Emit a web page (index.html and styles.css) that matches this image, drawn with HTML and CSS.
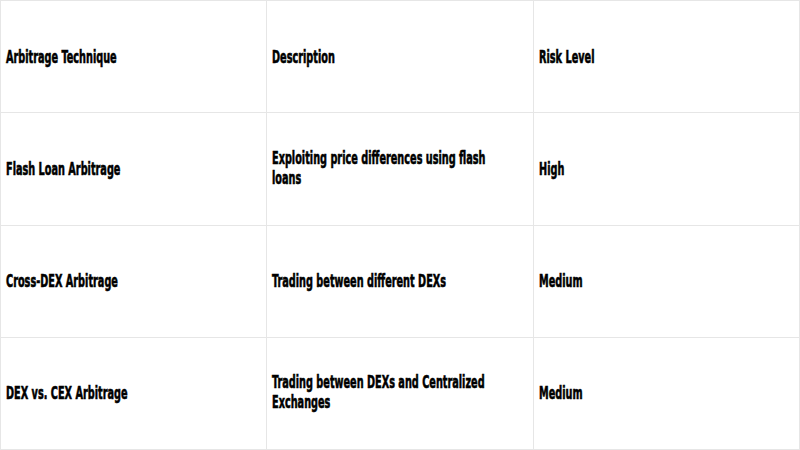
FILE: index.html
```html
<!DOCTYPE html>
<html>
<head>
<meta charset="utf-8">
<link rel="stylesheet" href="styles.css">
</head>
<body>
<table class="grid">
  <tr><td><span class="t">Arbitrage Technique</span></td><td><span class="t">Description</span></td><td><span class="t">Risk Level</span></td></tr>
  <tr><td><span class="t">Flash Loan Arbitrage</span></td><td><span class="t">Exploiting price differences using flash loans</span></td><td><span class="t">High</span></td></tr>
  <tr><td><span class="t">Cross-DEX Arbitrage</span></td><td><span class="t">Trading between different DEXs</span></td><td><span class="t">Medium</span></td></tr>
  <tr><td><span class="t">DEX vs. CEX Arbitrage</span></td><td><span class="t">Trading between DEXs and Centralized Exchanges</span></td><td><span class="t">Medium</span></td></tr>
</table>
</body>
</html>
```
FILE: styles.css
```css
html, body {
  margin: 0;
  padding: 0;
  background: #ffffff;
  overflow: hidden;
}
.grid {
  width: 800px;
  height: 450px;
  border-collapse: collapse;
  table-layout: fixed;
  font-family: "DejaVu Sans Condensed", "DejaVu Sans", sans-serif;
  font-stretch: condensed;
  font-weight: 700;
  font-size: 18px;
  line-height: 20px;
  color: #000;
}
.grid td {
  border: 1px solid #e6e6e6;
  padding: 0 20px 0 5px;
  vertical-align: middle;
  overflow: hidden;
  height: 100px;
}
.t {
  display: inline-block;
  width: calc(100% / 0.6);
  margin-top: -2px;
  transform: scaleX(0.6);
  transform-origin: left center;
  -webkit-text-stroke: 0.6px #000;
}
```
